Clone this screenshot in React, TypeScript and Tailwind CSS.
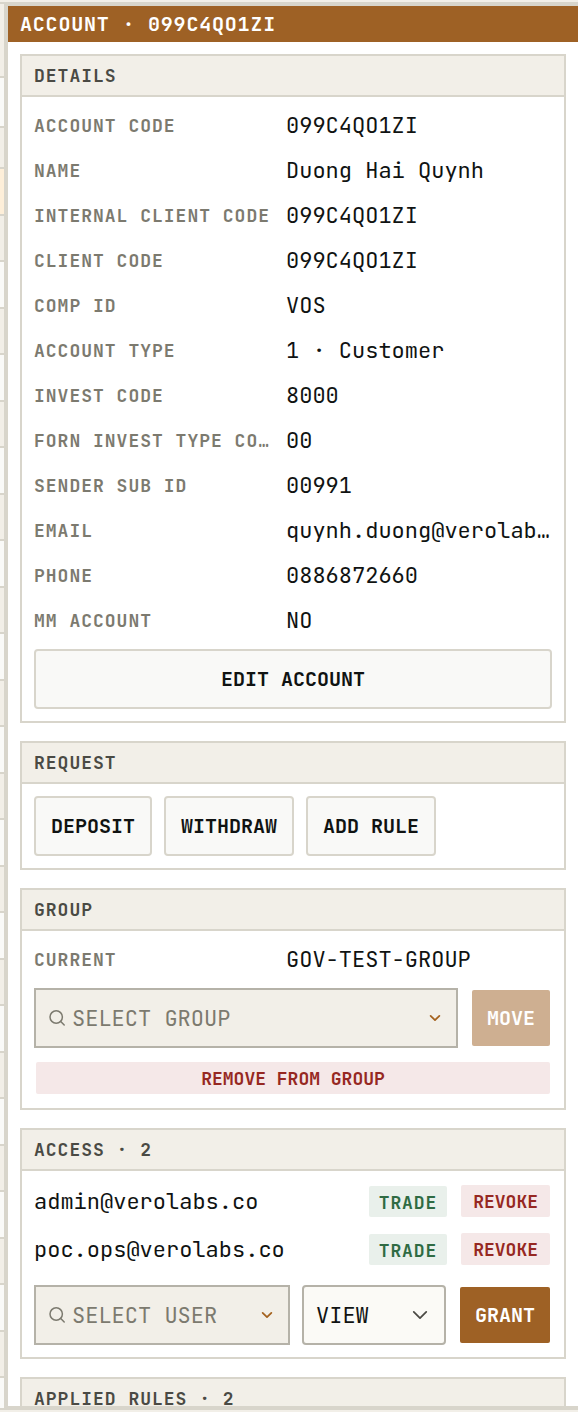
import React, { useState } from 'react';
import { clsx } from 'clsx';

const DETAILS: [string, string][] = [
    ['ACCOUNT CODE', '099C4QO1ZI'],
    ['NAME', 'Duong Hai Quynh'],
    ['INTERNAL CLIENT CODE', '099C4QO1ZI'],
    ['CLIENT CODE', '099C4QO1ZI'],
    ['COMP ID', 'VOS'],
    ['ACCOUNT TYPE', '1 · Customer'],
    ['INVEST CODE', '8000'],
    ['FORN INVEST TYPE CODE', '00'],
    ['SENDER SUB ID', '00991'],
    ['EMAIL', 'quynh.duong@verolabs.co'],
    ['PHONE', '0886872660'],
    ['MM ACCOUNT', 'NO'],
];

const USERS = ['admin@verolabs.co', 'poc.ops@verolabs.co'];

function Section({ title, children }: { title: string; children?: React.ReactNode }) {
    return (
        <section className="shrink-0 border-2 border-[#d8d5cb] bg-white">
            <h2 className="border-b-2 border-[#d8d5cb] bg-[#f2efe8] px-3 pt-1.5 pb-[5px] text-lg font-semibold tracking-[1px] text-[#4a4a44]">
                {title}
            </h2>
            <div className="flex flex-col gap-3 p-3">{children}</div>
        </section>
    );
}

function Field({ label, value }: { label: string; value: string }) {
    return (
        <div className="flex h-[33px] items-center gap-3">
            <dt className="w-60 shrink-0 truncate text-lg font-semibold tracking-[1px] text-[#7c7a6f]">{label}</dt>
            <dd className="min-w-0 flex-1 truncate text-[22px]">{value}</dd>
        </div>
    );
}

function Button({
    variant = 'outline',
    className,
    children,
    ...rest
}: React.ButtonHTMLAttributes<HTMLButtonElement> & { variant?: 'outline' | 'solid' | 'danger' }) {
    return (
        <button
            type="button"
            className={clsx(
                'shrink-0 rounded border-2 bg-clip-padding font-semibold',
                variant === 'outline' && 'h-[60px] border-[#d8d5cb] bg-[#f9f9f7] px-[15px] text-xl',
                variant === 'solid' && 'h-[60px] border-transparent bg-[#9e6125] px-[15px] text-xl text-white disabled:opacity-50',
                variant === 'danger' && 'h-9 border-transparent bg-[#f5e8e8] px-3 pt-0.5 text-lg leading-7 text-[#962822]',
                className,
            )}
            {...rest}
        >
            {children}
        </button>
    );
}

function Chevron({ className }: { className?: string }) {
    return (
        <svg viewBox="0 0 16 16" className={className} fill="none" stroke="currentColor" strokeLinecap="round" strokeLinejoin="round" aria-hidden="true">
            <path d="M3 5.5l5 5 5-5" />
        </svg>
    );
}

function SearchSelect({ label }: { label: string }) {
    const [query, setQuery] = useState('');
    return (
        <div className="flex h-[60px] min-w-0 flex-1 items-center border-2 border-[#b5b2a8] bg-[#f2efe8] px-3">
            <svg viewBox="0 0 18 18" className="mr-1.5 size-[18px] shrink-0 text-[#7c7a6f]" fill="none" stroke="currentColor" strokeWidth="1.5" strokeLinecap="round" aria-hidden="true">
                <circle cx="8.2" cy="8" r="6.2" />
                <path d="M12.7 12.5l3.5 3.5" />
            </svg>
            <input
                type="text"
                value={query}
                onChange={(e) => setQuery(e.target.value)}
                aria-label={label}
                placeholder={label}
                className="w-0 min-w-0 flex-1 bg-transparent text-[22px] outline-none placeholder:text-[#7c7a6f]"
            />
            <Chevron className="mr-0.5 size-3.5 shrink-0 stroke-2 text-[#a4621f]" />
        </div>
    );
}

// Slice of the accounts table that stays visible beside the panel
function TableEdge() {
    return (
        <div className="w-1 shrink-0 overflow-hidden" aria-hidden="true">
            <div className="h-[74px] border-b-2 border-[#d8d5cb] bg-[#f2efe8]" />
            <div className="h-[50px] border-b-2 border-[#d8d5cb] bg-[#fafaf8]" />
            <div className="h-[41px] border-b-2 border-[#d8d5cb] bg-[#f2efe8]" />
            <div className="h-[47px] border-b-2 border-[#d8d5cb] bg-[#feefd9]" />
            {Array.from({ length: 26 }, (_, i) => (
                <div
                    key={i}
                    className={clsx(
                        'border-b-2 border-[#d8d5cb]',
                        i % 2 === 0 ? 'h-[46px] bg-[#f2efe8]' : 'h-[47px] bg-[#fafaf8]',
                    )}
                />
            ))}
        </div>
    );
}

export default function App() {
    const [permission, setPermission] = useState('VIEW');

    return (
        <div className="flex h-screen flex-col overflow-hidden bg-[#f2efe8] py-0.5 font-['JetBrains_Mono','DejaVu_Sans_Mono',monospace] text-[#101312]">
            <div className="flex min-h-0 flex-1 border-y-2 border-[#d8d5cb]">
                <TableEdge />
                <aside className="flex min-w-0 flex-1 flex-col border-y-2 border-l-4 border-[#d8d5cb] bg-white">
                    <h1 className="shrink-0 bg-[#9e6125] px-3 py-1 text-xl font-semibold tracking-[0.04em] text-white">
                        ACCOUNT · 099C4QO1ZI
                    </h1>

                    <div className="flex min-h-0 flex-1 flex-col gap-[18px] overflow-y-auto p-3 [scrollbar-width:none]">
                        <Section title="DETAILS">
                            <dl className="flex flex-col gap-3">
                                {DETAILS.map(([label, value]) => (
                                    <Field key={label} label={label} value={value} />
                                ))}
                            </dl>
                            <Button>EDIT ACCOUNT</Button>
                        </Section>

                        <Section title="REQUEST">
                            <div className="flex flex-wrap gap-3">
                                <Button>DEPOSIT</Button>
                                <Button>WITHDRAW</Button>
                                <Button>ADD RULE</Button>
                            </div>
                        </Section>

                        <Section title="GROUP">
                            <dl>
                                <Field label="CURRENT" value="GOV-TEST-GROUP" />
                            </dl>
                            <div className="flex gap-3">
                                <SearchSelect label="SELECT GROUP" />
                                <Button variant="solid" disabled>MOVE</Button>
                            </div>
                            <Button variant="danger">REMOVE FROM GROUP</Button>
                        </Section>

                        <Section title="ACCESS · 2">
                            {USERS.map((user) => (
                                <div key={user} className="flex h-9 items-center gap-3">
                                    <span className="min-w-0 flex-1 truncate pt-0.5 text-[22px] leading-9">{user}</span>
                                    <span className="rounded-xs bg-[#e9f0eb] px-2.5 pt-[3px] text-lg leading-7 font-semibold tracking-wider text-[#2f6b43]">
                                        TRADE
                                    </span>
                                    <Button variant="danger">REVOKE</Button>
                                </div>
                            ))}
                            <div className="mt-1.5 flex gap-3">
                                <SearchSelect label="SELECT USER" />
                                <div className="relative w-36 shrink-0">
                                    <select
                                        value={permission}
                                        onChange={(e) => setPermission(e.target.value)}
                                        aria-label="Permission"
                                        className="h-[60px] w-full appearance-none rounded border-2 border-[#b5b2a8] bg-[#fbfaf6] px-3 text-[22px]"
                                    >
                                        <option>VIEW</option>
                                        <option>TRADE</option>
                                    </select>
                                    <Chevron className="pointer-events-none absolute top-5 right-4 size-5 stroke-[1.4] text-[#4a4a44]" />
                                </div>
                                <Button variant="solid">GRANT</Button>
                            </div>
                        </Section>

                        <Section title="APPLIED RULES · 2" />
                    </div>
                </aside>
            </div>
        </div>
    );
}
